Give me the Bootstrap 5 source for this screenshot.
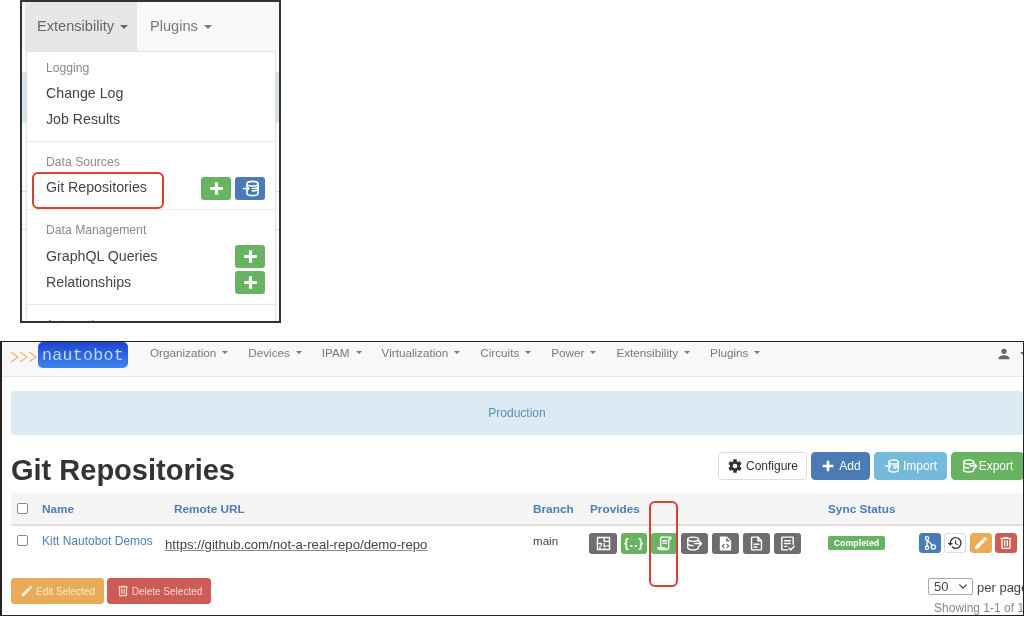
<!DOCTYPE html>
<html lang="en">
<head>
<meta charset="utf-8">
<title>Git Repositories</title>
<link href="https://cdn.jsdelivr.net/npm/bootstrap@5.3.0/dist/css/bootstrap.min.css" rel="stylesheet">
<style>
html,body{margin:0;padding:0;background:#fff;font-family:"Liberation Sans",Arial,sans-serif;overflow:hidden}
.ic{width:1em;height:1em;fill:currentColor;flex:none}
.ics{fill:none;stroke:currentColor;stroke-width:2;stroke-linecap:round;stroke-linejoin:round}
.shot-a{position:relative;margin-left:20px;width:261px;height:323px;border:2px solid #333;overflow:hidden;background:#fff}
.shot-b{position:relative;margin-top:18px;height:275px;border:1px solid #222;border-width:1px 1px 1px 2px;overflow:hidden;background:#fff}
.soft{filter:blur(.5px)}
/* top crop */
.bar-a{height:49px;background:#f8f8f8;padding-left:3px}
.bar-a .nav-link{height:49px;display:flex;align-items:center;padding:0 13px;font-size:14.6px;color:#777}
.bar-a .nav-link.on{background:#e7e7e7;color:#666;width:112px;padding-left:12px}
.bar-a .dropdown-toggle::after{margin-left:6px}
.back-band{height:51px;margin-top:21px;background:#d9e8f2}
.back-rule{height:1px;background:#ddd;margin-top:68px}
.back-rule.next{margin-top:37px}
.menu-a{position:absolute;left:4px;top:49px;width:250px;height:280px;background:#fff;border:1px solid #e4e4e4;box-shadow:0 2px 4px rgba(0,0,0,.08);padding-top:8px}
.m-head{font-size:12.2px;color:#8a8a8a;line-height:16px;padding-left:19px;margin-bottom:5px}
.m-head.roomy{margin-bottom:6px}
.m-item{display:flex;align-items:center;justify-content:space-between;height:26px;padding:0 10px 0 19px;font-size:14.2px;color:#444}
.m-item.lifted .btn.m-btn{margin-top:-2px}
.m-rule{height:1px;background:#e8e8e8;margin:8px 0 12px}
.m-btns{display:flex;gap:4px}
.btn.m-btn{width:30px;height:23px;padding:0;border-radius:3px;display:flex;align-items:center;justify-content:center;font-size:19px;border:0}
.tone-green{background:#68b362!important;border-color:#68b362!important;color:#fff!important}
.tone-blue{background:#4a7bb5!important;border-color:#4a7bb5!important;color:#fff!important}
.tone-sky{background:#74bbdb!important;border-color:#74bbdb!important;color:#fff!important}
.tone-amber{background:#e8ac57!important;border-color:#e8ac57!important;color:#fff!important}
.tone-red{background:#cd5c56!important;border-color:#cd5c56!important;color:#fff!important}
.tone-white{background:#fff!important;border-color:#ddd!important;color:#333!important}
.mark-red{position:absolute;border:2px solid #d8412f;border-radius:6px;pointer-events:none;z-index:5}
.mark-one{left:10px;top:170px;width:132px;height:37px}
.mark-two{left:647px;top:159px;width:29px;height:86px}
/* bottom crop */
.bar-b{height:35px;background:#f8f8f8;border-bottom:1px solid #e7e7e7;padding:0}
.brand-arrows{margin-left:8px;width:28px;height:12px;margin-top:9px;flex:none}
.brand-box{width:90px;height:26px;flex:none;background:linear-gradient(#1f45cf,#3d86ee);border-radius:5px;color:#c4d8f5;font-family:"Liberation Mono",monospace;font-size:16.6px;line-height:28px;text-align:center;letter-spacing:.3px}
.bar-b .nav-link{font-size:11.7px;color:#777;padding:3px 10px 0;line-height:16px}
.bar-b .nav-link.dropdown-toggle::after{margin-left:6px}
.nav-list{margin-left:12px}
.who{margin-left:auto;color:#666;font-size:16px;width:27px;height:20px;flex:none;align-items:center;gap:8px;margin-top:2px}
.who::after{content:"";flex:none;border-top:4px solid #666;border-left:4px solid transparent;border-right:4px solid transparent}
.prod{margin:14px 0 0 9px;height:44px;background:#dcebf3;border-radius:3px;color:#5b8fb3;font-size:12px;display:flex;align-items:center;justify-content:center}
.title-row{margin:17px -1px 0 9px;height:28px}
.title-row h1{font-family:"Liberation Sans",sans-serif;font-size:29px;font-weight:700;color:#333;margin:0;line-height:34px;padding-top:1px}
.btn.top-btn{height:28px;padding:0;font-size:12px;border-radius:4px;display:flex;align-items:center;justify-content:center;gap:3px;border-width:1px}
.tb-conf{width:89px}.tb-add{width:59px}.tb-imp{width:73px}.btn.top-btn.tb-exp{width:73px;gap:1px}
.top-btn .ic{font-size:16px}
.grid-wrap{margin:13px 0 0 9px}
.repo-table{table-layout:fixed;width:1013px;margin:0;border-collapse:collapse}
.repo-table th{height:32px;background:#f5f5f5;border-bottom:2px solid #ddd;padding:2px 0 0 6px;font-size:11.8px;font-weight:700;color:#4a7db9;vertical-align:middle}
.repo-table th .box{margin-top:-2px}
.repo-table td{padding:9px 0 0 6px;height:42px;font-size:11.6px;color:#444;vertical-align:top}
.form-check-input.box{width:11px;height:11px;margin:0;border-color:#8a8a8a;border-radius:2px;display:block}
.repo-name{color:#4f81bd;text-decoration:none;display:block;margin-top:-3px;font-size:12px}
.repo-url{display:block;margin:2px 0 0 -9px;color:#444;font-size:13.2px;line-height:16px;text-decoration:underline;white-space:nowrap;text-decoration-color:#888}
.branch{display:block;margin-top:-3px}
.prov{display:flex;gap:4px;margin-top:-2px;margin-left:-1px}
.pv{width:27px;height:21px;border-radius:3px;display:flex;align-items:center;justify-content:center;font-size:17px;color:#fff;background:#6e6e6e;flex:none}
.pv.wide{width:28px}
.pv.slim{width:26px}
.pv.ok{background:#68b362}
.brace{font-size:12.5px;font-weight:700;line-height:1;white-space:nowrap;letter-spacing:.8px}
.done{display:block;background:#68b362;border-radius:2px;color:#fff;font-size:8.8px;font-weight:700;line-height:14px;width:57px;text-align:center;margin-top:1px}
.acts{display:flex;gap:3.4px;margin:-2px 0 0 -1px}
.btn.act{width:22px;height:20px;padding:0;border-radius:3px;display:flex;align-items:center;justify-content:center;font-size:16px;border-width:1px}
.foot-row{padding:0 0 0 9px;margin-top:11px}
.btn.low-btn{height:26px;padding:0;font-size:10px;border-radius:3px;display:flex;align-items:center;justify-content:center;gap:2px;border-width:1px}
.lb-edit{width:93px;color:#fbe9d0!important}.lb-del{width:104px;margin-left:3px;color:#f6d8d6!important}
.low-btn .ic{font-size:14px}
.pager{margin-left:auto;width:95px;flex:none;font-size:13px;color:#444}
.pager-line{height:18px;gap:4px;white-space:nowrap}
.form-select.sel{width:45px;flex:none;height:17px;padding:0 0 0 5px;font-size:13px;line-height:15px;border-radius:2px;border-color:#aaa;background-position:right 4px center;background-size:10px 9px;color:#444}
.shown{font-size:12px;color:#888;margin:5px 0 0 6px;line-height:14px;white-space:nowrap}
.c-a{width:25px}.c-b{width:132px}.c-c{width:359px}.c-d{width:57px}.c-e{width:238px}.c-f{width:92px}
</style>
</head>
<body>
<svg width="0" height="0" class="d-block position-absolute">
<symbol id="i-plus" viewBox="0 0 24 24"><path d="M20 14H14V20H10V14H4V10H10V4H14V10H20V14Z"/></symbol>
<symbol id="i-cog" viewBox="0 0 24 24"><path d="M12,15.5A3.5,3.5 0 0,1 8.5,12A3.5,3.5 0 0,1 12,8.5A3.5,3.5 0 0,1 15.5,12A3.5,3.5 0 0,1 12,15.5M19.43,12.97C19.47,12.65 19.5,12.33 19.5,12C19.5,11.67 19.47,11.34 19.43,11L21.54,9.37C21.73,9.22 21.78,8.95 21.66,8.73L19.66,5.27C19.54,5.05 19.27,4.96 19.05,5.05L16.56,6.05C16.04,5.66 15.5,5.32 14.87,5.07L14.5,2.42C14.46,2.18 14.25,2 14,2H10C9.75,2 9.54,2.18 9.5,2.42L9.13,5.07C8.5,5.32 7.96,5.66 7.44,6.05L4.95,5.05C4.73,4.96 4.46,5.05 4.34,5.27L2.34,8.73C2.21,8.95 2.27,9.22 2.46,9.37L4.57,11C4.53,11.34 4.5,11.67 4.5,12C4.5,12.33 4.53,12.65 4.57,12.97L2.46,14.63C2.27,14.78 2.21,15.05 2.34,15.27L4.34,18.73C4.46,18.95 4.73,19.03 4.95,18.95L7.44,17.94C7.96,18.34 8.5,18.68 9.13,18.93L9.5,21.58C9.54,21.82 9.75,22 10,22H14C14.25,22 14.46,21.82 14.5,21.58L14.87,18.93C15.5,18.67 16.04,18.34 16.56,17.94L19.05,18.95C19.27,19.03 19.54,18.95 19.66,18.73L21.66,15.27C21.78,15.05 21.73,14.78 21.54,14.63L19.43,12.97Z"/></symbol>
<symbol id="i-pencil" viewBox="0 0 24 24"><path d="M20.71,7.04C21.1,6.65 21.1,6 20.71,5.63L18.37,3.29C18,2.9 17.35,2.9 16.96,3.29L15.12,5.12L18.87,8.87M3,17.25V21H6.75L17.81,9.93L14.06,6.18L3,17.25Z"/></symbol>
<symbol id="i-trash" viewBox="0 0 24 24"><path d="M9,3V4H4V6H5V19A2,2 0 0,0 7,21H17A2,2 0 0,0 19,19V6H20V4H15V3H9M7,6H17V19H7V6M9,8V17H11V8H9M13,8V17H15V8H13Z"/></symbol>
<symbol id="i-user" viewBox="0 0 24 24"><path d="M12,4A4,4 0 0,1 16,8A4,4 0 0,1 12,12A4,4 0 0,1 8,8A4,4 0 0,1 12,4M12,14C16.42,14 20,15.79 20,18V20H4V18C4,15.79 7.58,14 12,14Z"/></symbol>
<symbol id="i-hist" viewBox="0 0 24 24"><path d="M13.5,8H12V13L16.28,15.54L17,14.33L13.5,12.25V8M13,3A9,9 0 0,0 4,12H1L4.96,16.03L9,12H6A7,7 0 0,1 13,5A7,7 0 0,1 20,12A7,7 0 0,1 13,19C11.07,19 9.32,18.21 8.06,16.94L6.64,18.36C8.27,20 10.5,21 13,21A9,9 0 0,0 22,12A9,9 0 0,0 13,3"/></symbol>
<symbol id="i-dbin" viewBox="0 0 24 24"><g class="ics"><ellipse cx="14.5" cy="6" rx="7" ry="3"/><path d="M7.500 6v3M21.500 6v12c0 1.700-3.100 3-7 3s-7-1.300-7-3v-3"/><path d="M21.500 12c0 1.700-3.100 3-7 3M21.500 9c0 1.700-3.100 3-7 3"/><path d="M3 12h7M7.500 9.500l2.500 2.500-2.500 2.500"/></g></symbol>
<symbol id="i-dbout" viewBox="0 0 24 24"><g class="ics"><ellipse cx="10" cy="6" rx="7.500" ry="3"/><path d="M2.500 6v12c0 1.700 3.300 3 7.500 3s7.500-1.300 7.500-3v-2M2.500 12c0 1.700 3.300 3 7.500 3M17.500 6v3"/><path d="M12 12h10M19 9l3 3-3 3"/></g></symbol>
<symbol id="i-floor" viewBox="0 0 24 24"><g class="ics"><rect x="3.500" y="3.500" width="17" height="17"/><path d="M3.500 12H9v3M13 3.500V9h7.500M13 12v4h3M20.500 15H18M13 20.500V19M7 20.500V17"/></g></symbol>
<symbol id="i-scroll" viewBox="0 0 24 24"><g class="ics" stroke-width="2.400"><path d="M8 3h13v1.500c0 1-.8 1.500-1.500 1.500H18v11c0 2-1.500 3.500-3.500 3.500H5c-1.700 0-2.500-1-2.500-2.500h10c0 1.200.7 2 1.500 2"/><path d="M6.500 17V5c0-1.200.8-2 1.800-2M9.500 8h5.500M9.500 11.500h5.500"/></g></symbol>
<symbol id="i-fcode" viewBox="0 0 24 24"><path d="M5.500 2A1.500 1.500 0 0 0 4 3.500v17A1.500 1.500 0 0 0 5.500 22h13a1.500 1.500 0 0 0 1.500-1.500V8l-6-6zM13 3.500 18.500 9H13z"/><path d="m10.500 12.500-3 3 3 3M13.500 12.500l3 3-3 3" fill="none" stroke="#6e6e6e" stroke-width="1.800"/></symbol>
<symbol id="i-fdoc" viewBox="0 0 24 24"><g class="ics"><path d="M6 3h8l5 5v12a1 1 0 0 1-1 1H6a1 1 0 0 1-1-1V4a1 1 0 0 1 1-1z"/><path d="M14 3v5h5M8.500 13h7M8.500 17h4"/></g></symbol>
<symbol id="i-txtchk" viewBox="0 0 24 24"><g class="ics"><path d="M12 21H5a1 1 0 0 1-1-1V4a1 1 0 0 1 1-1h14a1 1 0 0 1 1 1v9"/><path d="M8 8h8M8 12h8M8 16h3M14 18.500l2.500 2.500 5-5"/></g></symbol>
<symbol id="i-branch" viewBox="0 0 24 24"><g class="ics" stroke-width="2.200"><circle cx="7.500" cy="5" r="2.500"/><circle cx="7.500" cy="19" r="2.500"/><circle cx="17" cy="18" r="3.200"/><path d="M7.500 7.500v9M8.500 8c1 3 5 4 7 7.500"/></g></symbol>
</svg>

<div class="shot-a soft">
  <nav class="bar-a d-flex">
    <a class="nav-link dropdown-toggle on" href="#">Extensibility</a>
    <a class="nav-link dropdown-toggle" href="#">Plugins</a>
  </nav>
  <div class="back-band"></div>
  <div class="back-rule"></div>
  <div class="back-rule next"></div>
  <div class="menu-a">
    <div class="m-head">Logging</div>
    <div class="m-item">Change Log</div>
    <div class="m-item">Job Results</div>
    <div class="m-rule"></div>
    <div class="m-head">Data Sources</div>
    <div class="m-item">Git Repositories
      <span class="m-btns"><button class="btn m-btn tone-green"><svg class="ic"><use href="#i-plus"/></svg></button><button class="btn m-btn tone-blue"><svg class="ic"><use href="#i-dbin"/></svg></button></span>
    </div>
    <div class="m-rule"></div>
    <div class="m-head roomy">Data Management</div>
    <div class="m-item lifted">GraphQL Queries
      <span class="m-btns"><button class="btn m-btn tone-green"><svg class="ic"><use href="#i-plus"/></svg></button></span>
    </div>
    <div class="m-item lifted">Relationships
      <span class="m-btns"><button class="btn m-btn tone-green"><svg class="ic"><use href="#i-plus"/></svg></button></span>
    </div>
    <div class="m-rule"></div>
    <div class="m-head">Automation</div>
  </div>
  <div class="mark-red mark-one"></div>
</div>

<div class="shot-b soft">
  <nav class="bar-b d-flex align-items-start">
    <svg class="brand-arrows" viewBox="0 0 28 12"><path d="M1 1l7 5-7 5M10 1l7 5-7 5M19 1l7 5-7 5" fill="none" stroke="#f3b474" stroke-width="1.400"/></svg>
    <div class="brand-box">nautobot</div>
    <ul class="nav nav-list flex-nowrap">
      <li class="nav-item"><a class="nav-link dropdown-toggle" href="#">Organization</a></li>
      <li class="nav-item"><a class="nav-link dropdown-toggle" href="#">Devices</a></li>
      <li class="nav-item"><a class="nav-link dropdown-toggle" href="#">IPAM</a></li>
      <li class="nav-item"><a class="nav-link dropdown-toggle" href="#">Virtualization</a></li>
      <li class="nav-item"><a class="nav-link dropdown-toggle" href="#">Circuits</a></li>
      <li class="nav-item"><a class="nav-link dropdown-toggle" href="#">Power</a></li>
      <li class="nav-item"><a class="nav-link dropdown-toggle" href="#">Extensibility</a></li>
      <li class="nav-item"><a class="nav-link dropdown-toggle" href="#">Plugins</a></li>
    </ul>
    <div class="who d-flex"><svg class="ic"><use href="#i-user"/></svg></div>
  </nav>
  <div class="prod">Production</div>
  <div class="title-row d-flex justify-content-between align-items-start">
    <h1>Git Repositories</h1>
    <div class="d-flex gap-1">
      <button class="btn top-btn tb-conf tone-white"><svg class="ic"><use href="#i-cog"/></svg>Configure</button>
      <button class="btn top-btn tb-add tone-blue"><svg class="ic"><use href="#i-plus"/></svg>Add</button>
      <button class="btn top-btn tb-imp tone-sky"><svg class="ic"><use href="#i-dbin"/></svg>Import</button>
      <button class="btn top-btn tb-exp tone-green"><svg class="ic"><use href="#i-dbout"/></svg>Export</button>
    </div>
  </div>
  <div class="grid-wrap">
    <table class="repo-table">
      <colgroup><col class="c-a"><col class="c-b"><col class="c-c"><col class="c-d"><col class="c-e"><col class="c-f"><col></colgroup>
      <thead><tr>
        <th><input class="form-check-input box" type="checkbox" aria-label="Select all"></th>
        <th>Name</th><th>Remote URL</th><th>Branch</th><th>Provides</th><th>Sync Status</th><th></th>
      </tr></thead>
      <tbody><tr>
        <td><input class="form-check-input box" type="checkbox" aria-label="Select"></td>
        <td><a class="repo-name" href="#">Kitt Nautobot Demos</a></td>
        <td><a class="repo-url" href="#">https://github.com/not-a-real-repo/demo-repo</a></td>
        <td><span class="branch">main</span></td>
        <td><div class="prov">
          <span class="pv wide"><svg class="ic"><use href="#i-floor"/></svg></span>
          <span class="pv ok slim"><span class="brace">{..}</span></span>
          <span class="pv ok slim"><svg class="ic"><use href="#i-scroll"/></svg></span>
          <span class="pv"><svg class="ic"><use href="#i-dbout"/></svg></span>
          <span class="pv"><svg class="ic"><use href="#i-fcode"/></svg></span>
          <span class="pv"><svg class="ic"><use href="#i-fdoc"/></svg></span>
          <span class="pv"><svg class="ic"><use href="#i-txtchk"/></svg></span>
        </div></td>
        <td><span class="done">Completed</span></td>
        <td><div class="acts">
          <button class="btn act tone-blue"><svg class="ic"><use href="#i-branch"/></svg></button>
          <button class="btn act tone-white"><svg class="ic"><use href="#i-hist"/></svg></button>
          <button class="btn act tone-amber"><svg class="ic"><use href="#i-pencil"/></svg></button>
          <button class="btn act tone-red"><svg class="ic"><use href="#i-trash"/></svg></button>
        </div></td>
      </tr></tbody>
    </table>
  </div>
  <div class="foot-row d-flex align-items-start">
    <button class="btn low-btn lb-edit tone-amber"><svg class="ic"><use href="#i-pencil"/></svg>Edit Selected</button>
    <button class="btn low-btn lb-del tone-red"><svg class="ic"><use href="#i-trash"/></svg>Delete Selected</button>
    <div class="pager">
      <div class="pager-line d-flex align-items-start"><select class="form-select sel" aria-label="Per page"><option>50</option></select><span>per page</span></div>
      <div class="shown">Showing 1-1 of 1</div>
    </div>
  </div>
  <div class="mark-red mark-two"></div>
</div>
<script src="https://cdn.jsdelivr.net/npm/bootstrap@5.3.0/dist/js/bootstrap.bundle.min.js"></script>
</body>
</html>
